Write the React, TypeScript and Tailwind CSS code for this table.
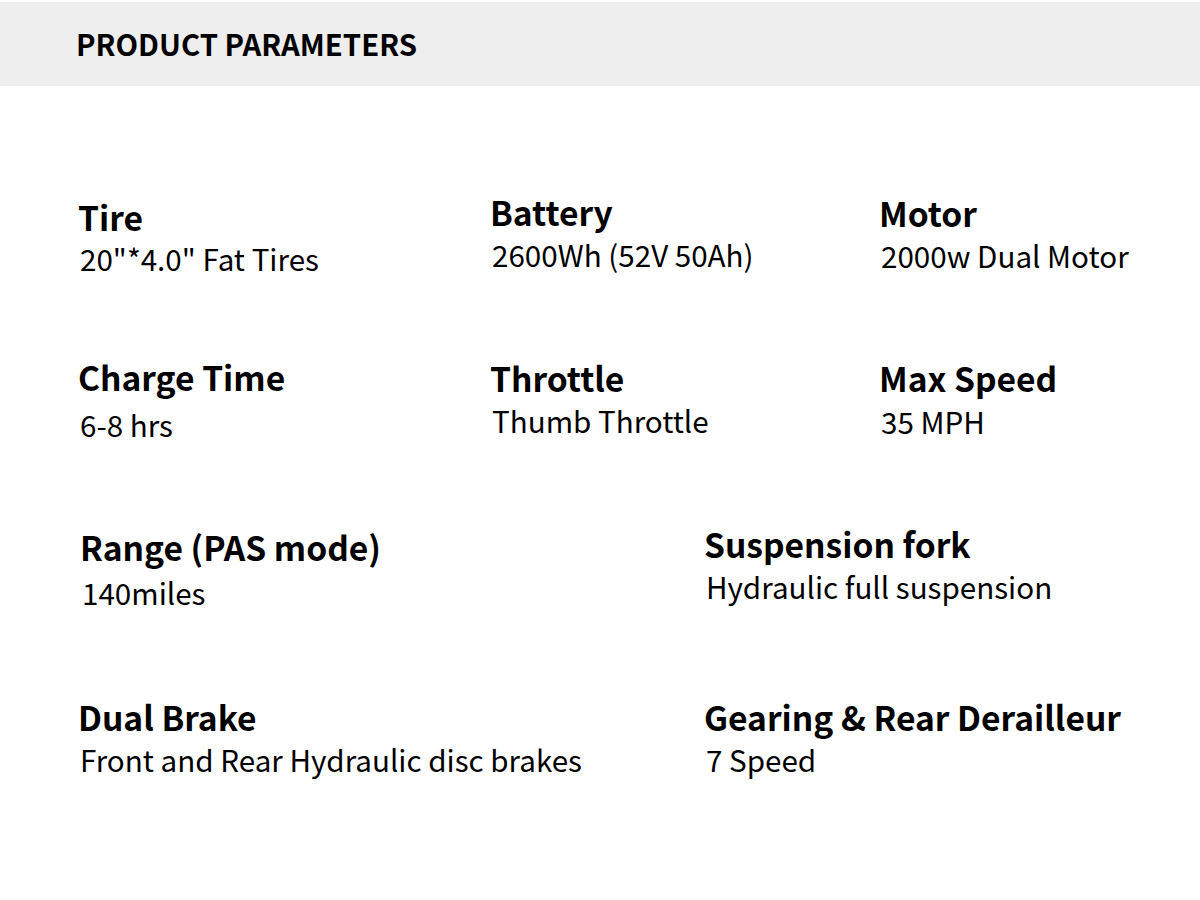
import React from 'react';

interface Param {
    title: string;
    value: string;
    box: string;
    gap: string;
}

const rowOne: Param[] = [
    { title: 'Tire', value: '20"*4.0" Fat Tires', box: 'w-[412px] pt-[5px]', gap: 'mt-[10px]' },
    { title: 'Battery', value: '2600Wh (52V 50Ah)', box: 'w-[389px] pt-0', gap: 'mt-[11px]' },
    { title: 'Motor', value: '2000w Dual Motor', box: 'flex-1 pt-[1px]', gap: 'mt-[11px]' },
];

const rowTwo: Param[] = [
    { title: 'Charge Time', value: '6-8 hrs', box: 'w-[412px] pt-0', gap: 'mt-[16px]' },
    { title: 'Throttle', value: 'Thumb Throttle', box: 'w-[389px] pt-[1px]', gap: 'mt-[11px]' },
    { title: 'Max Speed', value: '35 MPH', box: 'flex-1 pt-[1px]', gap: 'mt-[12px]' },
];

const rowThree: Param[] = [
    { title: 'Range (PAS mode)', value: '140miles', box: 'w-[626px] pt-[3px] pl-[2px]', gap: 'mt-[14px]' },
    { title: 'Suspension fork', value: 'Hydraulic full suspension', box: 'flex-1 pt-0', gap: 'mt-[11px]' },
];

const rowFour: Param[] = [
    { title: 'Dual Brake', value: 'Front and Rear Hydraulic disc brakes', box: 'w-[626px] pt-0', gap: 'mt-[11px]' },
    { title: 'Gearing & Rear Derailleur', value: '7 Speed', box: 'flex-1 pt-0', gap: 'mt-[11px]' },
];

const ParamItem: React.FC<{ item: Param }> = ({ item }) => (
    <div className={item.box}>
        <div className="text-[33.6px] font-bold leading-none text-black">{item.title}</div>
        <div className={`${item.gap} ml-[2px] text-[29.6px] leading-none text-black`}>{item.value}</div>
    </div>
);

const App: React.FC = () => {
    return (
        <div
            className="w-[1200px] h-[900px] bg-white overflow-hidden"
            style={{ fontFamily: '"Noto Sans CJK SC", "Noto Sans", sans-serif' }}
        >
            <div className="mt-[2px] h-[84px] bg-[#eeeeee] flex items-center pl-[76px]">
                <h1 className="text-[29.3px] font-bold leading-none text-black">PRODUCT PARAMETERS</h1>
            </div>

            <div className="pt-[109px] pl-[78px]">
                <div className="h-[165px] flex">
                    {rowOne.map(p => <ParamItem key={p.title} item={p} />)}
                </div>
                <div className="h-[167px] flex">
                    {rowTwo.map(p => <ParamItem key={p.title} item={p} />)}
                </div>
                <div className="h-[173px] flex">
                    {rowThree.map(p => <ParamItem key={p.title} item={p} />)}
                </div>
                <div className="flex">
                    {rowFour.map(p => <ParamItem key={p.title} item={p} />)}
                </div>
            </div>
        </div>
    );
};

export default App;
